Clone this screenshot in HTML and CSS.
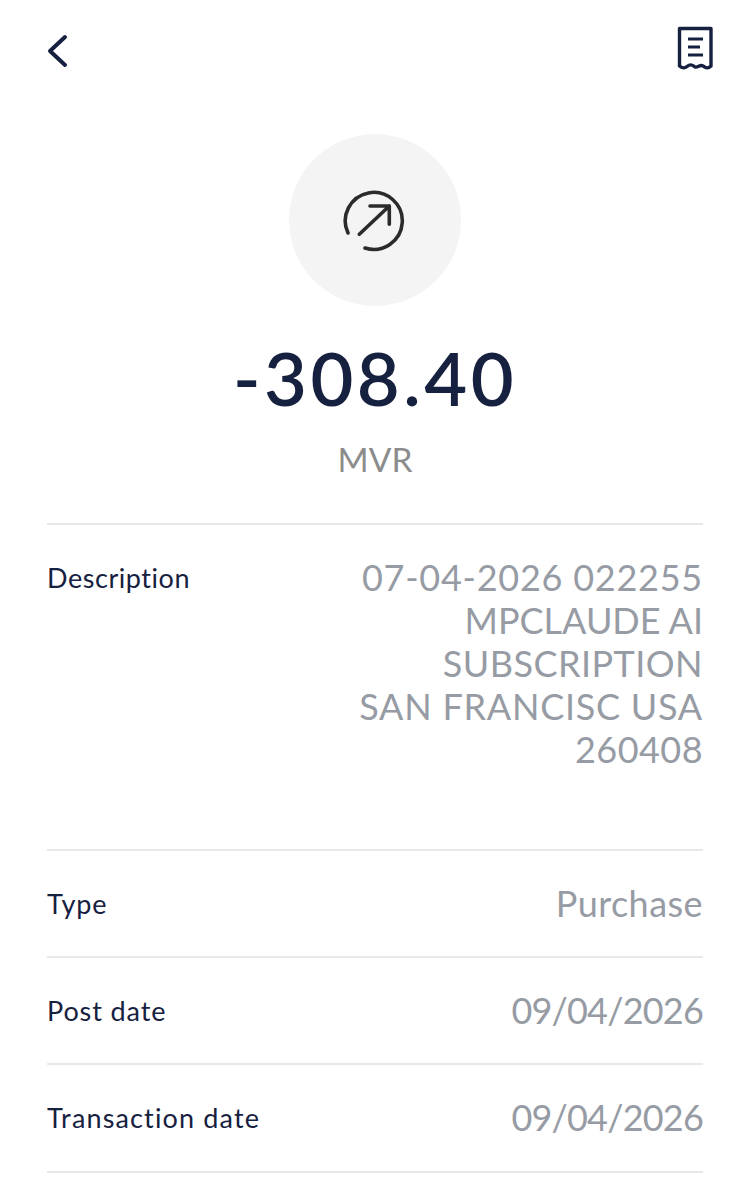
FILE: index.html
```html
<!DOCTYPE html>
<html lang="en">
<head>
<meta charset="utf-8">
<title>Transaction details</title>
<link rel="stylesheet" href="styles.css">
</head>
<body>
<main class="screen">
  <header class="topbar">
    <svg class="icon-back" viewBox="0 0 24 34" width="24" height="34" aria-label="Back">
      <path d="M18 3 L3 17 L18 31" fill="none" stroke="#16213f" stroke-width="4" stroke-linecap="round" stroke-linejoin="round"/>
    </svg>
    <svg class="icon-receipt" viewBox="0 0 36 44" width="36" height="44" aria-label="Receipt">
      <path d="M2.500 2.500 H34 V40 C31 43 29 42 26 40 C23 38 21 42 18 41 C15 38 13 38 10 40.500 C7 43 5 42 2.500 40 Z" fill="none" stroke="#16213f" stroke-width="3.400" stroke-linejoin="round"/>
      <path d="M11 13 H26 M11 21 H23 M11 29 H26" fill="none" stroke="#16213f" stroke-width="3"/>
    </svg>
  </header>

  <section class="summary">
    <div class="badge">
      <svg viewBox="0 0 64 64" width="64" height="64" aria-hidden="true">
        <path d="M5 45 A28.500 28.500 0 1 1 22 60" fill="none" stroke="#2b2b2d" stroke-width="3.600" stroke-linecap="round"/>
        <path d="M16.300 46.300 L46.300 18 M27 18 H46.300 V36.300" fill="none" stroke="#2b2b2d" stroke-width="3.600" stroke-linecap="round" stroke-linejoin="round"/>
      </svg>
    </div>
    <div class="amount">-308.40</div>
    <div class="currency">MVR</div>
  </section>

  <dl class="details">
    <div class="row row-tall">
      <dt class="label-tight">Description</dt>
      <dd>
        <span class="line line-wide">07-04-2026 022255</span>
        <span class="line">MPCLAUDE AI</span>
        <span class="line line-mid">SUBSCRIPTION</span>
        <span class="line line-wide">SAN FRANCISC USA</span>
        <span class="line line-mid">260408</span>
      </dd>
    </div>
    <div class="row">
      <dt>Type</dt>
      <dd class="line-mid">Purchase</dd>
    </div>
    <div class="row">
      <dt>Post date</dt>
      <dd class="date">09/04/2026</dd>
    </div>
    <div class="row">
      <dt class="label-wide">Transaction date</dt>
      <dd class="date">09/04/2026</dd>
    </div>
  </dl>
</main>
</body>
</html>
```
FILE: styles.css
```css
html, body {
  margin: 0;
  padding: 0;
  background: #ffffff;
}

.screen {
  width: 750px;
  height: 1200px;
  overflow: hidden;
  box-sizing: border-box;
  padding: 0 47px;
  font-family: "Lato", "Noto Sans", sans-serif;
}

.topbar {
  height: 134px;
  display: flex;
  justify-content: space-between;
  align-items: flex-start;
}

.icon-back {
  margin-top: 34px;
}

.icon-receipt {
  margin-top: 26px;
  margin-right: -10px;
}

.summary {
  display: flex;
  flex-direction: column;
  align-items: center;
  height: 389px;
}

.badge {
  width: 172px;
  height: 172px;
  border-radius: 50%;
  background: #f4f4f4;
  display: flex;
  align-items: center;
  justify-content: center;
}

.amount {
  margin-top: 28px;
  font-size: 74px;
  line-height: 88px;
  font-weight: 600;
  color: #16213f;
  letter-spacing: 3.500px;
}

.currency {
  margin-top: 15px;
  font-size: 33.500px;
  line-height: 44px;
  color: #8c8c8c;
}

.details {
  margin: 0;
}

.row {
  display: flex;
  justify-content: space-between;
  align-items: flex-start;
  border-top: 2px solid #e8e8e8;
  padding-top: 25px;
  height: 80px;
}

.row-tall {
  height: 299px;
}

.row:last-child {
  height: 81px;
  border-bottom: 2px solid #e8e8e8;
}

dt {
  font-size: 27px;
  line-height: 56px;
  color: #16213f;
  letter-spacing: 0.900px;
}

dt.label-tight {
  letter-spacing: 0.550px;
}

dt.label-wide {
  letter-spacing: 1.150px;
}

dd {
  margin: 0;
  font-size: 36px;
  line-height: 43px;
  padding-top: 6px;
  text-align: right;
  color: #969ba4;
}

.line {
  display: block;
}

.line-wide {
  letter-spacing: 0.750px;
}

.line-mid {
  letter-spacing: 0.450px;
}

.date {
  letter-spacing: -0.800px;
}
```
